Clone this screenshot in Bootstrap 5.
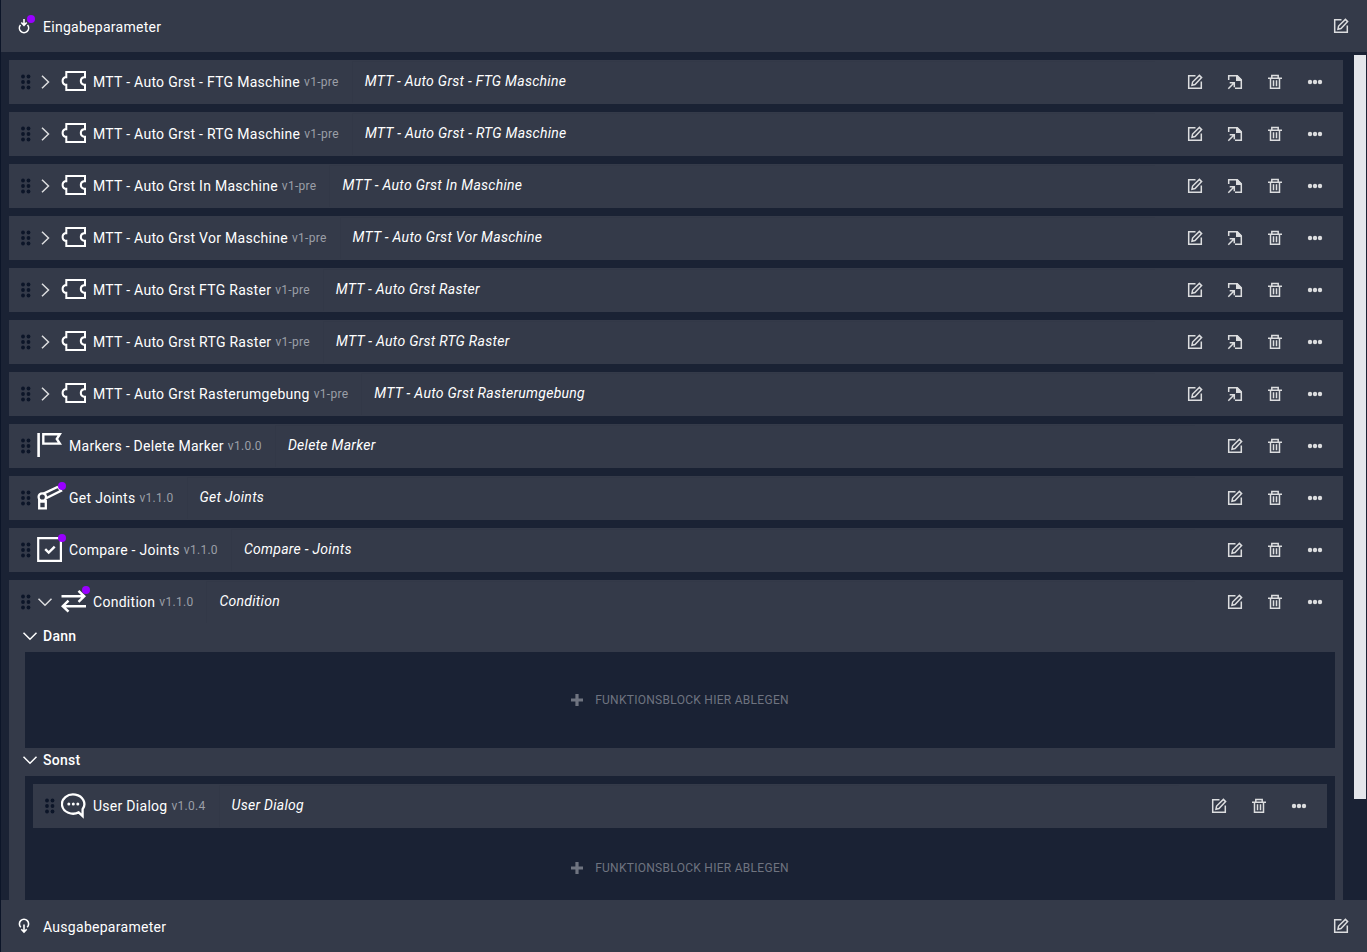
<!DOCTYPE html>
<html lang="de">
<head>
<meta charset="utf-8">
<meta name="viewport" content="width=device-width, initial-scale=1">
<title>Funktionsblöcke</title>
<link href="https://cdn.jsdelivr.net/npm/bootstrap@5.3.0/dist/css/bootstrap.min.css" rel="stylesheet">
<style>
  :root { --panel: #343a49; --deep: #1a2234; --edge: #0c1528; --soft: #dcdddf; --dim: #9b9fa7; --accent: #9900ff; }
  body { font-family: Roboto, "Liberation Sans", sans-serif; font-size: 14px; line-height: 20px; letter-spacing: .02em; color: #fff; background: var(--deep); border-left: 1px solid var(--edge); }
  svg { display: block; flex: none; }
  .bar { height: 52px; background: var(--panel); padding: 0 6px 0 12px; }
  .bar-icon { width: 22px; height: 24px; }
  .bar-title { font-size: 14px; line-height: 20px; font-weight: 400; margin: 0 0 0 8px; padding-top: 2px; }
  .blocks { gap: 8px; padding: 8px 0 0 8px; }
  .block { background: var(--panel); }
  .block-head { height: 44px; padding: 0 8px 0 12px; }
  .grip { width: 16px; color: var(--edge); }
  .plain-btn { background: none; border: 0; padding: 0; color: var(--soft); display: flex; align-items: center; justify-content: center; }
  .tool { width: 40px; height: 40px; }
  .toggle { width: 24px; height: 32px; padding-right: 8px; }
  .kind { width: 32px; }
  .version { font-size: 12px; color: var(--dim); margin-left: 4px; }
  .note { height: 42px; margin: 0 20px 0 13px; padding: 0 0 3px 12px; border: 1px solid #323847; border-width: 1px 0 0 1px; font-style: italic; }
  .branch-head { height: 28px; padding: 0 0 4px 14px; }
  .branch-title { font-size: 14px; line-height: 20px; font-weight: 500; margin: 0 0 0 6px; }
  .branch-toggle { width: 14px; height: 20px; color: #fff; }
  .branch { background: var(--deep); margin: 0 8px 0 16px; padding: 8px; }
  .drop { height: 80px; color: #6f7480; font-size: 12px; gap: 12px; text-transform: uppercase; }
  .track { width: 24px; padding: 3px 1px 0 11px; }
  .thumb { width: 12px; height: 88%; background: #e4e6eb; }
</style>
</head>
<body class="vh-100 overflow-hidden">
<svg width="0" height="0" class="position-absolute" aria-hidden="true">
  <symbol id="grip" viewBox="0 0 10 16"><g fill="currentColor"><circle cx="2" cy="2.5" r="1.9"/><circle cx="7.5" cy="2.5" r="1.9"/><circle cx="2" cy="8" r="1.9"/><circle cx="7.5" cy="8" r="1.9"/><circle cx="2" cy="13.5" r="1.9"/><circle cx="7.5" cy="13.5" r="1.9"/></g></symbol>
  <symbol id="right" viewBox="0 0 16 16"><path d="M5 1.700 11.500 8 5 14.300" fill="none" stroke="currentColor" stroke-width="1.500"/></symbol>
  <symbol id="down" viewBox="0 0 16 16"><path d="M1.500 4.700 8 11.200l6.500-6.500" fill="none" stroke="currentColor" stroke-width="1.500"/></symbol>
  <symbol id="edit" viewBox="0 0 16 16"><path d="M8.500 1.700H1.700v12.600h12.600V7.500" fill="none" stroke="currentColor" stroke-width="1.500"/><path d="M5 11.200l.600-3.200 6.800-6.600 2.200 2.200L8 10.500z" fill="none" stroke="currentColor" stroke-width="1.500"/></symbol>
  <symbol id="open" viewBox="0 0 16 16"><path d="M1.700 6V1.700H10l4.300 4.300v8.300H8" fill="none" stroke="currentColor" stroke-width="1.500"/><path d="M9 1h1.500L15 5.500V7H9z" fill="currentColor"/><path d="M1.300 14.700 6.700 9.300M2.700 8.700h4.600v4.600" fill="none" stroke="currentColor" stroke-width="1.500"/></symbol>
  <symbol id="trash" viewBox="0 0 16 16"><path d="M1 4.200h14M4.800 4V1.500h6.400V4M3.500 4.200v10.100h9V4.200M6.500 6.200v6M9.500 6.200v6" fill="none" stroke="currentColor" stroke-width="1.500"/></symbol>
  <symbol id="more" viewBox="0 0 16 16"><g fill="currentColor"><circle cx="3" cy="8" r="2.200"/><circle cx="8" cy="8" r="2.200"/><circle cx="13" cy="8" r="2.200"/></g></symbol>
  <symbol id="plus" viewBox="0 0 12 12"><path d="M6 0v12M0 6h12" stroke="currentColor" stroke-width="3.200"/></symbol>
  <symbol id="puzzle" viewBox="0 0 26 26"><path d="M5.300 8.300V3H24v5.300h-1.200c-1.800.400-3 1.900-3 3.700s1.200 3.300 3 3.700H24V21H5.300v-5.300H4C2.600 15.200 1.600 13.800 1.600 12S2.600 8.800 4 8.300z" fill="none" stroke="#fff" stroke-width="2"/></symbol>
  <symbol id="flag" viewBox="0 0 26 26"><path d="M1.600 0v24" stroke="#fff" stroke-width="2.600"/><path d="M6.300 1.200h16.500l-3 4.800 3 4.600H6.300z" fill="none" stroke="#fff" stroke-width="2.400"/></symbol>
  <symbol id="robot" viewBox="0 0 26 26"><path d="M2.200 14v9.400h6.600V15M2 16.700h7M6.500 8.600 21 1.700M8.600 13.500 24 5.800 21 1.700" fill="none" stroke="#fff" stroke-width="2.300"/><circle cx="5.300" cy="12" r="3.700" fill="none" stroke="#fff" stroke-width="2.300"/></symbol>
  <symbol id="check" viewBox="0 0 26 26"><path d="M1.200 1.200h22.700v22.700H1.200z" fill="none" stroke="#fff" stroke-width="2.200"/><path d="M8.200 12.200l3.500 3.400 6-6" fill="none" stroke="#fff" stroke-width="2.400"/></symbol>
  <symbol id="swap" viewBox="0 0 26 26"><path d="M.500 7.300h23M17.500 1.800 23.200 7.300l-5.700 5.500M25 17.200H2M7.500 11.700 1.800 17.200l5.700 5.500" fill="none" stroke="#fff" stroke-width="2.500"/></symbol>
  <symbol id="chat" viewBox="0 0 26 26"><path d="M17.700 19.400A11.200 9.600 0 1 1 21.600 16.200V23z" fill="none" stroke="#fff" stroke-width="2.300"/><g fill="#fff"><circle cx="7.800" cy="11" r="1.500"/><circle cx="12.300" cy="11" r="1.500"/><circle cx="16.800" cy="11" r="1.500"/></g></symbol>
</svg>

<div class="d-flex flex-column h-100">
  <header class="bar d-flex align-items-center flex-shrink-0">
    <svg class="bar-icon" viewBox="0 0 22 24" aria-hidden="true"><path d="M7.500 11a4.600 4.600 0 1 0 7 0" fill="none" stroke="#fff" stroke-width="1.600"/><path d="M11 5v6.500M8.300 8.500 11 11.300l2.700-2.800" fill="none" stroke="#fff" stroke-width="1.600"/><circle cx="18" cy="5" r="4" fill="#9900ff"/></svg>
    <h1 class="bar-title flex-grow-1">Eingabeparameter</h1>
    <button class="plain-btn tool" aria-label="Bearbeiten"><svg width="16" height="16"><use href="#edit"/></svg></button>
  </header>

  <main class="d-flex flex-grow-1 overflow-hidden">
    <div class="blocks d-flex flex-column flex-grow-1 overflow-hidden" id="blocks">
      <section class="block flex-shrink-0" id="condition">
        <div class="block-slot"></div>
        <div class="branch-head d-flex align-items-center"><button class="plain-btn branch-toggle" aria-label="Dann einklappen"><svg width="16" height="16"><use href="#down"/></svg></button><h2 class="branch-title">Dann</h2></div>
        <div class="branch"><div class="drop d-flex align-items-center justify-content-center"><svg width="12" height="12"><use href="#plus"/></svg><span>Funktionsblock hier ablegen</span></div></div>
        <div class="branch-head d-flex align-items-center"><button class="plain-btn branch-toggle" aria-label="Sonst einklappen"><svg width="16" height="16"><use href="#down"/></svg></button><h2 class="branch-title">Sonst</h2></div>
        <div class="branch"><section class="block" id="dialog"></section><div class="drop d-flex align-items-center justify-content-center"><svg width="12" height="12"><use href="#plus"/></svg><span>Funktionsblock hier ablegen</span></div></div>
      </section>
    </div>
    <div class="track flex-shrink-0"><div class="thumb"></div></div>
  </main>

  <footer class="bar d-flex align-items-center flex-shrink-0">
    <svg class="bar-icon" viewBox="0 0 22 24" aria-hidden="true"><path d="M7.800 13.200A4.600 4.600 0 1 1 14.200 13.200" fill="none" stroke="#fff" stroke-width="1.600"/><path d="M11 10.500v7.500M8.300 15.200l2.700 2.800 2.700-2.800" fill="none" stroke="#fff" stroke-width="1.600"/></svg>
    <h1 class="bar-title flex-grow-1">Ausgabeparameter</h1>
    <button class="plain-btn tool" aria-label="Bearbeiten"><svg width="16" height="16"><use href="#edit"/></svg></button>
  </footer>
</div>

<script src="https://cdn.jsdelivr.net/npm/bootstrap@5.3.0/dist/js/bootstrap.bundle.min.js"></script>
<script>
  const icon = (id, size) => `<svg width="${size}" height="${size}" aria-hidden="true"><use href="#${id}"/></svg>`;
  const tool = (id, label) => `<button class="plain-btn tool" aria-label="${label}">${icon(id, 16)}</button>`;
  const head = b => `<div class="block-head d-flex align-items-center">
    <span class="grip"><svg width="10" height="16"><use href="#grip"/></svg></span>
    ${b.arrow ? `<button class="plain-btn toggle" aria-label="Auf- oder zuklappen">${icon(b.arrow, 16)}</button>` : ''}
    <span class="kind"><svg width="26" height="26" overflow="visible"><use href="#${b.icon}"/>${b.dot ? '<circle cx="25" cy="1" r="4" fill="#9900ff"/>' : ''}</svg></span>
    <span class="text-nowrap">${b.name}</span><span class="version text-nowrap">${b.version}</span>
    <span class="note d-flex align-items-center flex-grow-1 text-nowrap">${b.note || b.name}</span>
    ${tool('edit', 'Bearbeiten')}${b.link ? tool('open', 'Öffnen') : ''}${tool('trash', 'Löschen')}${tool('more', 'Mehr')}
  </div>`;
  const group = (name, note) => ({ name, note, version: 'v1-pre', icon: 'puzzle', arrow: 'right', link: true });
  const list = [
    group('MTT - Auto Grst - FTG Maschine'),
    group('MTT - Auto Grst - RTG Maschine'),
    group('MTT - Auto Grst In Maschine'),
    group('MTT - Auto Grst Vor Maschine'),
    group('MTT - Auto Grst FTG Raster', 'MTT - Auto Grst Raster'),
    group('MTT - Auto Grst RTG Raster'),
    group('MTT - Auto Grst Rasterumgebung'),
    { name: 'Markers - Delete Marker', note: 'Delete Marker', version: 'v1.0.0', icon: 'flag' },
    { name: 'Get Joints', version: 'v1.1.0', icon: 'robot', dot: true },
    { name: 'Compare - Joints', version: 'v1.1.0', icon: 'check', dot: true }
  ];
  const condition = document.getElementById('condition');
  condition.insertAdjacentHTML('beforebegin', list.map(b => `<section class="block flex-shrink-0">${head(b)}</section>`).join(''));
  condition.querySelector('.block-slot').innerHTML = head({ name: 'Condition', version: 'v1.1.0', icon: 'swap', arrow: 'down', dot: true });
  document.getElementById('dialog').innerHTML = head({ name: 'User Dialog', version: 'v1.0.4', icon: 'chat' });
</script>
</body>
</html>
